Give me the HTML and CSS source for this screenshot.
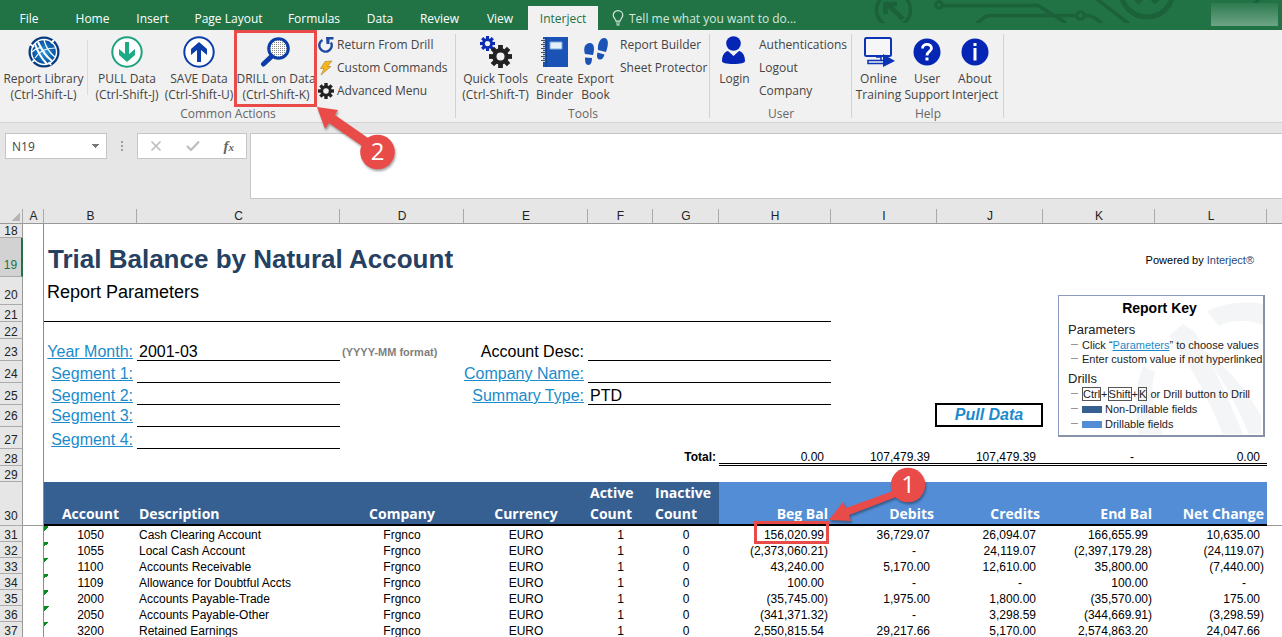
FILE: index.html
```html
<!DOCTYPE html>
<html lang="en">
<head>
<meta charset="utf-8">
<title>Trial Balance by Natural Account</title>
<link rel="stylesheet" href="styles.css">
</head>
<body>
<svg class="defs" width="0" height="0" aria-hidden="true">
  <defs>
    <radialGradient id="globe" cx="50%" cy="50%" r="55%"><stop offset="0" stop-color="#2f9be0"/><stop offset=".6" stop-color="#0b5aa8"/><stop offset="1" stop-color="#06286b"/></radialGradient>
    <pattern id="dots" width="2" height="2" patternUnits="userSpaceOnUse"><rect width="2" height="2" fill="#fff"/><rect width="1" height="1" fill="#8a8a8a"/></pattern>
    <symbol id="gear" viewBox="-12 -12 24 24">
      <g fill="currentColor"><rect x="-2.5" y="-12" width="5" height="24"/><rect x="-2.5" y="-12" width="5" height="24" transform="rotate(45)"/><rect x="-2.5" y="-12" width="5" height="24" transform="rotate(90)"/><rect x="-2.5" y="-12" width="5" height="24" transform="rotate(135)"/><circle r="8.6"/></g><circle r="4.2" fill="#f1f1f1"/>
    </symbol>
  </defs>
</svg>

<header class="titlebar">
  <nav class="tabs">
    <button class="tab tab-file">File</button>
    <button class="tab tab-home">Home</button>
    <button class="tab tab-insert">Insert</button>
    <button class="tab tab-page">Page Layout</button>
    <button class="tab tab-formulas">Formulas</button>
    <button class="tab tab-data">Data</button>
    <button class="tab tab-review">Review</button>
    <button class="tab tab-view">View</button>
    <button class="tab tab-active">Interject</button>
    <button class="tell"><svg width="12" height="16" viewBox="0 0 12 16" fill="none" stroke="#d5e8dc" stroke-width="1.2"><path d="M4 11.2C4 9 1.2 8 1.2 5.3A4.7 4.5 0 0 1 10.800 5.3C10.800 8 8 9 8 11.200ZM4 13H8M4.500 14.800H7.500"/></svg>Tell me what you want to do...</button>
  </nav>
  <svg class="circuit" width="412" height="23" viewBox="870 0 412 23" fill="none" stroke="#1b6139" stroke-width="3.500" aria-hidden="true">
    <circle cx="893.500" cy="10" r="17"/><path d="M903 19L887 4M885.500 14V4H897" stroke-width="4.500"/>
    <circle cx="939" cy="5" r="3.300" stroke-width="3"/><path d="M943 5.500H1038L1066 23M976 24L985 17Q988 15.500 991 15.500H1075M1086 15.500Q1094 15 1102 24M1093 -4L1129 24"/><circle cx="1080.500" cy="15.500" r="3.800" stroke-width="3"/>
    <circle cx="1147" cy="-9" r="26" stroke-width="5"/><path d="M1134 -2L1139 2L1143 -3M1150 -3L1155 2L1160 -3M1254 4L1262 -4" />
  </svg>
  <div class="account-blur"></div>
</header>

<section class="ribbon">
  <div class="group group-actions">
    <div class="group-body">
      <button class="big big-library"><svg width="32" height="32" viewBox="0 0 32 32"><circle cx="16" cy="16" r="15.500" fill="url(#globe)"/><circle cx="16" cy="16" r="12.500" fill="none" stroke="#fff" stroke-width="1.400"/><g fill="none" stroke="#fff"><path d="M7 8Q11 20 19 28M10 6Q16 19 24 25" stroke-width="2"/><path d="M16 4Q19 15 27 21M4 16Q9 11 14 12M7 22Q13 12 27 12" stroke-width="1.200"/></g><path d="M2 8L6 11M23 29L21 26M26 4L23 7M4 26L7 24" stroke="#fff" stroke-width="2"/></svg><span>Report Library<br>(Ctrl-Shift-L)</span></button>
      <span class="divider"></span>
      <button class="big big-pull"><svg width="32" height="32" viewBox="0 0 32 32"><circle cx="16" cy="16" r="14.700" fill="#fff" stroke="#1da27e" stroke-width="2"/><path d="M14 6H18V18L24 13V19L16 26L8 19V13L14 18Z" fill="#1eaa85"/></svg><span>PULL Data<br>(Ctrl-Shift-J)</span></button>
      <button class="big big-save"><svg width="32" height="32" viewBox="0 0 32 32"><circle cx="16" cy="16" r="14.700" fill="#fff" stroke="#0b3ea8" stroke-width="2"/><path d="M14 26H18V14L24 19V13L16 6L8 13V19L14 14Z" fill="#0b3ea8"/></svg><span>SAVE Data<br>(Ctrl-Shift-U)</span></button>
      <button class="big big-drill"><svg width="32" height="32" viewBox="0 0 32 32"><path d="M3.500 28L12 20" stroke="#0b3ea8" stroke-width="5" stroke-linecap="round"/><circle cx="18.500" cy="12.500" r="9.800" fill="url(#dots)" stroke="#0b3ea8" stroke-width="3"/></svg><span>DRILL on Data<br>(Ctrl-Shift-K)</span></button>
      <div class="small-list">
        <button class="small"><svg width="16" height="16" viewBox="0 0 16 16"><path d="M4.500 3A6.200 6.200 0 1 0 13 5.500" fill="none" stroke="#1d49a5" stroke-width="2.400"/><path d="M8 0H15.500V2.500H11.500V7H8.500Z" fill="#1d49a5"/></svg>Return From Drill</button>
        <button class="small"><svg width="16" height="16" viewBox="0 0 16 16"><path d="M7 1.500L14 1L9.500 6.500H13L3 15L6 8.500H2.500Z" fill="#f5b51c" stroke="#b98a3a" stroke-width=".7"/></svg>Custom Commands</button>
        <button class="small ink"><svg width="16" height="16"><use href="#gear"/></svg>Advanced Menu</button>
      </div>
    </div>
    <div class="group-label">Common Actions</div>
  </div>
  <div class="group group-tools">
    <div class="group-body">
      <button class="big big-quick"><svg width="32" height="32" viewBox="0 0 32 32"><use href="#gear" x="0" y="0" width="15" height="15" color="#0a2bb5"/><use href="#gear" x="9" y="9" width="23" height="23" color="#222"/></svg><span>Quick Tools<br>(Ctrl-Shift-T)</span></button>
      <button class="big big-binder"><svg width="32" height="32" viewBox="0 0 32 32"><path d="M4 1H29V31H4Z" fill="#1a53b5"/><path d="M11 6H23V13H11Z" fill="#e4f0fb" stroke="#7fa8dc"/><path d="M7.500 1V31" stroke="#123f8e"/><path d="M2 4.500H6M2 8.500H6M2 12.500H6M2 16.500H6M2 20.500H6M2 24.500H6" stroke="#f1f1f1" stroke-width="2.400"/><path d="M2 4.500H6M2 8.500H6M2 12.500H6M2 16.500H6M2 20.500H6M2 24.500H6" stroke="#456" stroke-width="1.200"/></svg><span>Create<br>Binder</span></button>
      <button class="big big-book"><svg width="32" height="32" viewBox="0 0 32 32" fill="#1a53b5"><path d="M10 7C14 7 15 12 13 19L5 18C3 12 5 7 10 7ZM5 21.500L12 22C12 26 11 29 8.500 29C5.500 29 5 26 5 21.500Z"/><path d="M24 2C28.500 2 29 8 26 16L18 14C17.500 8 20 2 24 2ZM17.500 16.500L24.500 18.500C23.500 22 22 24 19.500 23.500C17 23 16.500 20 17.500 16.500Z"/></svg><span>Export<br>Book</span></button>
      <div class="small-list">
        <button class="small">Report Builder</button>
        <button class="small">Sheet Protector</button>
      </div>
    </div>
    <div class="group-label">Tools</div>
  </div>
  <div class="group group-user">
    <div class="group-body">
      <button class="big big-login"><svg width="32" height="32" viewBox="0 0 32 32" fill="#0526b5"><circle cx="14.500" cy="7.500" r="7.300"/><path d="M3 25C3 19 6 15.500 9 15L14.500 20L20 15C23 15.500 26 19 26 25C26 27 22 28 14.500 28C7 28 3 27 3 25Z"/></svg><span>Login</span></button>
      <div class="small-list">
        <button class="small">Authentications</button>
        <button class="small">Logout</button>
        <button class="small">Company</button>
      </div>
    </div>
    <div class="group-label">User</div>
  </div>
  <div class="group group-help">
    <div class="group-body">
      <button class="big big-online"><svg width="32" height="32" viewBox="0 0 32 32"><rect x="2" y="2" width="26" height="18" rx="1.500" fill="#f6f6f6" stroke="#0b33b5" stroke-width="2"/><path d="M13 21H18V24M20 24.500H5V27.500H20" stroke="#0b33b5" stroke-width="1.500" fill="none"/><path d="M20 18L32 25L20 31Z" fill="#0b33b5"/></svg><span>Online<br>Training</span></button>
      <button class="big big-support"><svg width="32" height="32" viewBox="0 0 32 32"><circle cx="16" cy="16" r="13.500" fill="#0526b5"/><path d="M11.500 12.500C11.500 7 20.500 7 20.500 12.300C20.500 15.500 16 15.500 16 19.500" fill="none" stroke="#fff" stroke-width="2.800"/><rect x="14.500" y="21.500" width="3" height="3" fill="#fff"/></svg><span>User<br>Support</span></button>
      <button class="big big-about"><svg width="32" height="32" viewBox="0 0 32 32"><circle cx="16" cy="16" r="13.500" fill="#0526b5"/><path d="M14.500 7H17.500V10H14.500ZM14.500 12H17.500V24.500H14.500Z" fill="#fff"/></svg><span>About<br>Interject</span></button>
    </div>
    <div class="group-label">Help</div>
  </div>
</section>

<section class="formula-bar">
  <select class="name-box" aria-label="Name box"><option>N19</option></select>
  <span class="grip"></span>
  <div class="fx-box">
    <button aria-label="Cancel"><svg width="12" height="12" viewBox="0 0 12 12" stroke="#bdbdbd" stroke-width="1.700"><path d="M1.500 1.500L10.500 10.500M10.500 1.500L1.500 10.500"/></svg></button>
    <button aria-label="Enter"><svg width="14" height="12" viewBox="0 0 14 12" fill="none" stroke="#bdbdbd" stroke-width="2.200"><path d="M1 6L5 10L13 1.500"/></svg></button>
    <button class="fx" aria-label="Insert function">f<small>x</small></button>
  </div>
  <textarea class="formula" aria-label="Formula"></textarea>
</section>

<main class="sheet">
<table class="grid">
  <colgroup><col class="c-n"><col class="c-a"><col class="c-b"><col class="c-c"><col class="c-d"><col class="c-d"><col class="c-f"><col class="c-g"><col class="c-h"><col class="c-i"><col class="c-i"><col class="c-h"><col class="c-h"><col></colgroup>
  <thead>
    <tr class="letters"><th class="corner"></th><th>A</th><th>B</th><th>C</th><th>D</th><th>E</th><th>F</th><th>G</th><th>H</th><th>I</th><th>J</th><th>K</th><th>L</th><th class="beyond"></th></tr>
  </thead>
  <tbody>
    <tr class="r18"><th>18</th><td class="a"></td><td colspan="12"></td></tr>
    <tr class="r19"><th class="selected">19</th><td class="a"></td><td colspan="8"><h1>Trial Balance by Natural Account</h1></td><td colspan="3" class="powered">Powered by <a href="#">Interject®</a></td><td></td></tr>
    <tr class="r20"><th>20</th><td class="a"></td><td colspan="12"><h2>Report Parameters</h2></td></tr>
    <tr class="r21"><th>21</th><td class="a"></td><td colspan="7" class="line"></td><td colspan="5"></td></tr>
    <tr class="r21"><th>22</th><td class="a"></td><td colspan="12"></td></tr>
    <tr class="param"><th>23</th><td class="a"></td><td class="label"><a href="#">Year Month:</a></td><td class="line">2001-03</td><td class="hint">(YYYY-MM format)</td><td class="label">Account Desc:</td><td colspan="3" class="line"></td><td colspan="5"></td></tr>
    <tr class="param"><th>24</th><td class="a"></td><td class="label"><a href="#">Segment 1:</a></td><td class="line"></td><td colspan="2" class="label"><a href="#">Company Name:</a></td><td colspan="3" class="line"></td><td colspan="5"></td></tr>
    <tr class="param"><th>25</th><td class="a"></td><td class="label"><a href="#">Segment 2:</a></td><td class="line"></td><td colspan="2" class="label"><a href="#">Summary Type:</a></td><td colspan="3" class="line">PTD</td><td colspan="5"></td></tr>
    <tr class="param raised"><th>26</th><td class="a"></td><td class="label"><a href="#">Segment 3:</a></td><td class="line"></td><td colspan="6"></td><td class="pull-cell"><button class="pull">Pull Data</button></td><td colspan="3"></td></tr>
    <tr class="param"><th>27</th><td class="a"></td><td class="label"><a href="#">Segment 4:</a></td><td class="line"></td><td colspan="10"></td></tr>
    <tr class="total"><th>28</th><td class="a"></td><td colspan="6" class="total-label">Total:</td><td class="num">0.00</td><td class="num">107,479.39</td><td class="num">107,479.39</td><td class="num dash">-</td><td class="num">0.00</td><td></td></tr>
    <tr class="r29"><th>29</th><td class="a"></td><td colspan="12"></td></tr>
    <tr class="heads"><th>30</th><td class="a"></td><td class="dark mid">Account</td><td class="dark">Description</td><td class="dark mid">Company</td><td class="dark mid">Currency</td><td class="dark">Active Count</td><td class="dark">Inactive Count</td><td class="light">Beg Bal</td><td class="light">Debits</td><td class="light">Credits</td><td class="light">End Bal</td><td class="light">Net Change</td><td class="rest"></td></tr>
    <tr class="data"><th>31</th><td class="a"></td><td class="acct">1050</td><td>Cash Clearing Account</td><td class="mid">Frgnco</td><td class="mid">EURO</td><td class="mid">1</td><td class="mid">0</td><td class="num">156,020.99</td><td class="num">36,729.07</td><td class="num">26,094.07</td><td class="num">166,655.99</td><td class="num">10,635.00</td><td></td></tr>
    <tr class="data"><th>32</th><td class="a"></td><td class="acct">1055</td><td>Local Cash Account</td><td class="mid">Frgnco</td><td class="mid">EURO</td><td class="mid">1</td><td class="mid">0</td><td class="num neg">(2,373,060.21)</td><td class="num dash">-</td><td class="num">24,119.07</td><td class="num neg">(2,397,179.28)</td><td class="num neg">(24,119.07)</td><td></td></tr>
    <tr class="data"><th>33</th><td class="a"></td><td class="acct">1100</td><td>Accounts Receivable</td><td class="mid">Frgnco</td><td class="mid">EURO</td><td class="mid">1</td><td class="mid">0</td><td class="num">43,240.00</td><td class="num">5,170.00</td><td class="num">12,610.00</td><td class="num">35,800.00</td><td class="num neg">(7,440.00)</td><td></td></tr>
    <tr class="data"><th>34</th><td class="a"></td><td class="acct">1109</td><td>Allowance for Doubtful Accts</td><td class="mid">Frgnco</td><td class="mid">EURO</td><td class="mid">1</td><td class="mid">0</td><td class="num">100.00</td><td class="num dash">-</td><td class="num dash">-</td><td class="num">100.00</td><td class="num dash">-</td><td></td></tr>
    <tr class="data"><th>35</th><td class="a"></td><td class="acct">2000</td><td>Accounts Payable-Trade</td><td class="mid">Frgnco</td><td class="mid">EURO</td><td class="mid">1</td><td class="mid">0</td><td class="num neg">(35,745.00)</td><td class="num">1,975.00</td><td class="num">1,800.00</td><td class="num neg">(35,570.00)</td><td class="num">175.00</td><td></td></tr>
    <tr class="data"><th>36</th><td class="a"></td><td class="acct">2050</td><td>Accounts Payable-Other</td><td class="mid">Frgnco</td><td class="mid">EURO</td><td class="mid">1</td><td class="mid">0</td><td class="num neg">(341,371.32)</td><td class="num dash">-</td><td class="num">3,298.59</td><td class="num neg">(344,669.91)</td><td class="num neg">(3,298.59)</td><td></td></tr>
    <tr class="data"><th>37</th><td class="a"></td><td class="acct">3200</td><td>Retained Earnings</td><td class="mid">Frgnco</td><td class="mid">EURO</td><td class="mid">1</td><td class="mid">0</td><td class="num">2,550,815.54</td><td class="num">29,217.66</td><td class="num">5,170.00</td><td class="num">2,574,863.20</td><td class="num">24,047.66</td><td></td></tr>
  </tbody>
</table>
<aside class="key">
  <svg class="key-art" width="205" height="140" viewBox="0 0 205 140" fill="#f3f5f7" aria-hidden="true"><path d="M148 15Q175 3 204 8V29Q180 20 160 30ZM110 40L124 28L136 36Q160 80 184 138H164Q140 80 110 40ZM140 50Q180 80 202 120V138H190Q170 90 140 50ZM84 70Q72 100 80 138H104Q88 100 96 76Z"/></svg>
  <h3>Report Key</h3>
  <h4>Parameters</h4>
  <ul><li>Click “<a href="#">Parameters</a>” to choose values</li><li>Enter custom value if not hyperlinked</li></ul>
  <h4>Drills</h4>
  <ul class="drills"><li><kbd>Ctrl</kbd>+<kbd>Shift</kbd>+<kbd>K</kbd> or Drill button to Drill</li><li><i class="swatch swatch-dark"></i>Non-Drillable fields</li><li><i class="swatch swatch-light"></i>Drillable fields</li></ul>
</aside>
</main>

<svg class="callouts" width="1282" height="637" viewBox="0 0 1282 637">
  <g class="shadowed" fill="#e94b48">
    <path d="M317 107L338 110L335 115L368 138L362 146L329 123L325 129Z"/><circle cx="377.500" cy="152" r="17.300"/>
    <path d="M829 520L843 502L846 508L893 491L896 497L849 515L851 521Z"/><circle cx="908" cy="485" r="17.300"/>
  </g>
  <g fill="none" stroke="#e94b48" stroke-width="3"><rect x="235.500" y="31.500" width="80" height="74"/><rect x="755.500" y="522.500" width="72" height="20"/></g>
  <text x="377.500" y="160">2</text><text x="908" y="493">1</text>
</svg>
</body>
</html>
```
FILE: styles.css
```css
* { box-sizing: border-box; }
body { margin: 0; height: 100vh; overflow: hidden; position: relative; background: #fff; font-family: "Open Sans", "Noto Sans", sans-serif; font-size: 12px; color: #444; }
button { border: 0; padding: 0; margin: 0; background: none; font: inherit; color: inherit; white-space: nowrap; }
.defs { position: absolute; }

/* Title bar and tabs */
.titlebar { position: relative; height: 30px; background: #217346; color: #fff; }
.tabs { display: flex; align-items: flex-end; height: 30px; }
.tab { height: 24px; text-align: center; }
.tab-file { width: 58px; margin-right: 4px; }
.tab-home { width: 61px; }
.tab-insert { width: 59px; }
.tab-page { width: 93px; }
.tab-formulas { width: 78px; }
.tab-data { width: 54px; }
.tab-review { width: 65px; }
.tab-view { width: 56px; }
.tab-active { width: 70px; background: #f1f1f1; color: #217346; }
.tell { display: flex; align-items: center; gap: 5px; height: 24px; margin-left: 14px; color: #d5e8dc; }
.circuit { position: absolute; top: 0; right: 0; }
.account-blur { position: absolute; top: 3px; right: 4px; width: 67px; height: 23px; background: linear-gradient(#2d7a4f, #6ea486); }

/* Ribbon */
.ribbon { display: flex; height: 93px; background: #f1f1f1; border-bottom: 1px solid #d2d2d2; }
.group { display: flex; flex-direction: column; position: relative; }
.group::after { content: ""; position: absolute; right: 0; top: 4px; bottom: 4px; width: 1px; background: #d2d2d2; }
.group-actions { width: 456px; }
.group-tools { width: 254px; }
.group-user { width: 142px; }
.group-help { width: 152px; }
.group-body { display: flex; flex: 1; }
.group-label { height: 17px; line-height: 18px; text-align: center; color: #666; }
.big { display: flex; flex-direction: column; align-items: center; gap: 3px; padding-top: 6px; line-height: 16px; text-align: center; color: #444; }
.big svg { flex: none; }
.big span { white-space: nowrap; }
.big-library { width: 87px; }
.divider { width: 1px; height: 55px; margin: 10px 4px 0 0; background: #dcdcdc; }
.big-pull { width: 70px; }
.big-save { width: 74px; }
.big-drill { width: 80px; }
.big-quick { width: 79px; }
.big-binder { width: 39px; }
.big-book { width: 43px; }
.big-login { width: 49px; }
.big-online { width: 53px; }
.big-support { width: 44px; }
.big-about { width: 52px; }
.small-list { display: flex; flex-direction: column; padding: 3px 0 0 2px; }
.small { display: flex; align-items: center; gap: 3px; height: 23px; }
.ink svg { color: #222; }
.group-tools .small-list { padding-left: 3px; }
.group-user .small-list { padding-left: 0; }

/* Formula bar */
.formula-bar { display: flex; align-items: flex-start; height: 85px; padding: 10px 0 9px 5px; background: #e6e6e6; }
.name-box { width: 102px; height: 26px; padding: 0 6px; appearance: none; border: 1px solid #c6c6c6; border-radius: 0; font: inherit; color: #444; background: linear-gradient(to bottom right, #777 50%, transparent 50%) 90px 10px / 4px 4px no-repeat, linear-gradient(to bottom left, #777 50%, transparent 50%) 86px 10px / 4px 4px no-repeat, #fff; }
.grip { width: 2px; height: 10px; margin: 8px 14px; background: repeating-linear-gradient(#a0a0a0 0 2px, transparent 2px 4px); }
.fx-box { display: flex; align-items: center; justify-content: space-around; width: 110px; height: 26px; background: #fff; border: 1px solid #c6c6c6; }
.fx-box svg { display: block; }
.fx { font: italic bold 15px "Liberation Serif", serif; color: #666; }
.fx small { font-size: 11px; }
.formula { flex: 1; height: 66px; margin-left: 3px; border: 1px solid #c6c6c6; border-right: 0; resize: none; background: #fff; }

/* Worksheet */
.sheet { position: relative; font-family: "Liberation Sans", Arial, sans-serif; color: #000; }
.grid { width: 100%; table-layout: fixed; border-collapse: separate; border-spacing: 0; line-height: 14px; }
.c-n { width: 23px; }
.c-a { width: 21px; }
.c-b { width: 93px; }
.c-c { width: 203px; }
.c-d { width: 124px; }
.c-f { width: 65px; }
.c-g { width: 66px; }
.c-h { width: 112px; }
.c-i { width: 106px; }
.grid th, .grid td { padding: 0; vertical-align: bottom; white-space: nowrap; }
.grid th { background: #e6e6e6; font-weight: normal; color: #222; }
.letters th { height: 16px; border-bottom: 1px solid #999; }
.grid .letters th { background: linear-gradient(#aaa, #aaa) right bottom / 1px 14px no-repeat, #e6e6e6; }
.grid .letters .corner { background: linear-gradient(to bottom right, transparent 50%, #b5b5b5 50%) 12px 5px / 8px 8px no-repeat, linear-gradient(#aaa, #aaa) right bottom / 1px 14px no-repeat, #e6e6e6; }
.grid .letters .beyond { background: #e6e6e6; }
.grid tbody th { border-right: 1px solid #999; border-bottom: 1px solid #ababab; text-align: center; line-height: 11px; }
.grid tbody .selected { border-right: 2px solid #217346; background: #d2d2d2; color: #217346; padding-bottom: 5px; }
.a { border-right: 1px solid #8c8c8c; }
.r18 { height: 14px; }
.r19 { height: 39px; }
.r20 { height: 28px; }
.grid .r20 th { padding-bottom: 3px; }
.r21 { height: 17px; }
.r29 { height: 16px; }
.param { height: 22px; font-size: 16px; line-height: 18px; }
.grid .param th { font-size: 12px; padding-bottom: 2px; }
.grid .raised .label { vertical-align: middle; }
.grid .raised th { padding-bottom: 4px; }
h1, h2 { margin: 0; font-family: "Liberation Sans Narrow", "Liberation Sans", sans-serif; }
h1 { padding: 0 0 2px 4px; font-size: 26px; line-height: 32px; color: #254061; }
h2 { padding: 0 0 1px 3px; font-size: 18px; line-height: 24px; font-weight: normal; }
a { color: #1b8bcb; }
.grid .powered { padding: 0 13px 10px 0; font-size: 11px; text-align: right; }
.powered a { color: #1f497d; text-decoration: none; }
.line { border-bottom: 1px solid #000; }
.grid .param .line { padding-left: 2px; line-height: 17px; }
.grid .label { padding-right: 4px; text-align: right; }
.grid .hint { padding-left: 2px; font-size: 11px; font-weight: bold; color: #808080; }
.pull-cell { position: relative; }
.pull { position: absolute; inset: -2px 0 0 -2px; border: 2px solid #000; background: #fff; font: italic bold 16px "Liberation Sans", Arial, sans-serif; color: #1b8bcb; }
.total { height: 17px; line-height: 12px; }
.total .num { border-bottom: 3px double #000; }
.grid .total-label { padding: 0 3px 3px 0; text-align: right; font-weight: bold; }
.grid .num { padding-right: 7px; text-align: right; }
.grid .neg { padding-right: 3px; }
.grid .dash { padding-right: 21px; }
.mid { text-align: center; }
.heads { height: 44px; font: bold 14px/21px "Open Sans", "Noto Sans", sans-serif; color: #fff; }
.grid .heads th { font: 12px/13px "Liberation Sans", Arial, sans-serif; padding-bottom: 2px; }
.heads .a, .rest { border-bottom: 1px solid #999; }
.grid .dark { padding-left: 2px; padding-right: 2px; white-space: normal; background: #366092; border-bottom: 2px solid #000; }
.grid .light { padding-right: 3px; text-align: right; background: #538dd5; border-bottom: 2px solid #000; }
.data { height: 16px; }
.grid .data td:nth-child(4) { padding-left: 2px; }
.acct { text-align: center; background: linear-gradient(to bottom right, #0a8a1c 50%, transparent 50%) 0 0 / 5px 5px no-repeat; }

/* Report key picture */
.key { position: absolute; left: 1058px; top: 87px; width: 207px; height: 142px; padding: 3px 0 0 9px; border: 1px solid #8a9bbd; border-right: 2px solid #8791a8; border-bottom: 2px solid #8791a8; background: #fff; font-size: 11px; color: #222; }
.key > * { position: relative; }
.key .key-art { position: absolute; left: 0; top: 0; }
.key h3 { margin: 0 12px 0 0; text-align: center; font-size: 14px; line-height: 18px; color: #000; }
.key h4 { margin: 5px 0 0; font-size: 13px; line-height: 16px; font-weight: normal; }
.key ul { margin: 0; padding: 0 0 0 14px; list-style: none; line-height: 14px; }
.key .drills { line-height: 15px; }
.key li { position: relative; white-space: nowrap; }
.key li::before { content: ""; position: absolute; left: -11px; top: 6px; width: 7px; height: 1px; background: #999; }
kbd { font: inherit; border: 1px solid #555; }
.swatch { display: inline-block; width: 20px; height: 7px; margin-right: 3px; }
.swatch-dark { background: #366092; }
.swatch-light { background: #538dd5; }

/* Callouts over the window */
.callouts { position: absolute; left: 0; top: 0; pointer-events: none; }
.shadowed { filter: drop-shadow(1px 2px 1px rgba(0, 0, 0, .35)); }
.callouts text { font: 24px "Open Sans", sans-serif; fill: #fff; text-anchor: middle; }
```
